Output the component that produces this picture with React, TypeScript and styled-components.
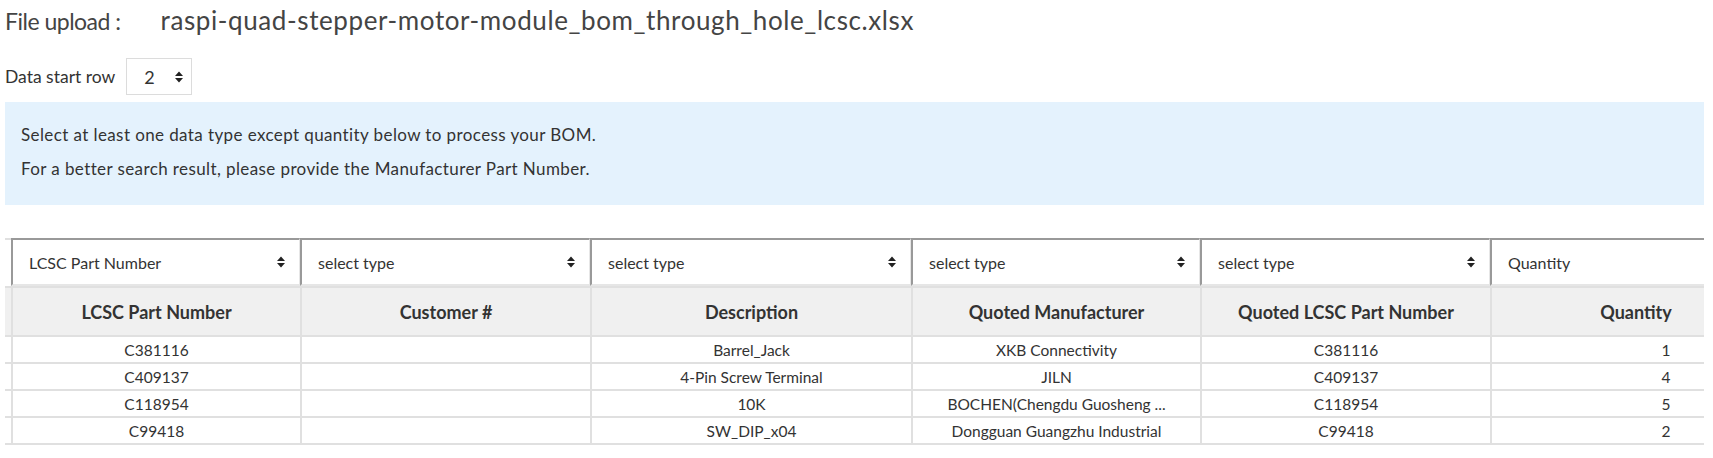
import React from 'react';
import styled, { createGlobalStyle } from 'styled-components';

const GlobalStyle = createGlobalStyle`
  body {
    margin: 0;
    background: #fff;
    font-family: Lato, "Open Sans", "Liberation Sans", sans-serif;
    color: #333;
  }
`;

const Page = styled.div`
  padding: 0 9px 0 5px;
  width: 1699px;
`;

const Title = styled.h2`
  margin: 0;
  display: flex;
  align-items: baseline;
  line-height: 40px;
  font-weight: 400;
  color: #444;
  white-space: nowrap;
`;

const TitleLabel = styled.span`
  font-size: 23px;
  letter-spacing: -0.5px;
`;

const FileName = styled.span`
  margin-left: 40px;
  font-size: 26px;
  letter-spacing: 0.6px;
`;

const Controls = styled.div`
  display: flex;
  align-items: center;
  gap: 11px;
  margin-top: 17px;
  font-size: 17.5px;
  color: #333;
`;

const SmallSelect = styled.div`
  box-sizing: border-box;
  width: 66px;
  height: 37px;
  border: 1px solid #dcdcdc;
  display: flex;
  align-items: center;
  justify-content: space-between;
  padding: 0 8px 0 17px;
  font-size: 18px;
  color: #333;
`;

const InfoBox = styled.div`
  margin-top: 7px;
  background: #e4f2fd;
  padding: 21px 16px 14px;
  font-size: 17px;
  letter-spacing: 0.4px;
  line-height: 24px;
  color: #333;
`;

const InfoLine = styled.p`
  margin: 0 0 10px;
`;

const Table = styled.div`
  margin-top: 33px;
  width: 1699px;
  overflow: hidden;
`;

const Row = styled.div`
  display: grid;
  grid-template-columns: 6px 289px 290px 321px 289px 290px 290px;
  width: max-content;
`;

const Spacer = styled.div<{ bg?: string }>`
  border-top: 2px solid #e0e0e0;
  background: ${p => p.bg || '#fff'};
`;

const SelectCell = styled.div`
  box-sizing: border-box;
  height: 48px;
  border-top: 2px solid #999;
  border-left: 2px solid #999;
  border-right: 1px solid #e6e6e6;
  border-bottom: 2px solid #e6e6e6;
  background: #fff;
  display: flex;
  align-items: center;
  justify-content: space-between;
  padding: 0 14px 0 16px;
  font-size: 16px;
  color: #333;
`;

const HeadCell = styled.div`
  box-sizing: border-box;
  height: 49px;
  border-top: 2px solid #e0e0e0;
  border-left: 2px solid #e0e0e0;
  background: #f0f0f0;
  display: flex;
  align-items: center;
  justify-content: center;
  font-size: 18px;
  font-weight: 700;
  color: #333;
`;

const DataCell = styled.div<{ shift?: number }>`
  box-sizing: border-box;
  height: 27px;
  border-top: 2px solid #e0e0e0;
  border-left: 2px solid #e0e0e0;
  display: flex;
  align-items: center;
  justify-content: center;
  padding-left: ${p => p.shift || 0}px;
  font-size: 15.5px;
  color: #333;
  white-space: nowrap;
`;

const BottomLine = styled.div`
  height: 2px;
  background: #e0e0e0;
`;

const SortIcon = () => (
  <svg width="8" height="12" viewBox="0 0 8 12">
    <path d="M0 5 L4 0.5 L8 5 Z M0 7 L4 11.5 L8 7 Z" fill="#222" />
  </svg>
);

const selects = ['LCSC Part Number', 'select type', 'select type', 'select type', 'select type', 'Quantity'];
const heads = ['LCSC Part Number', 'Customer #', 'Description', 'Quoted Manufacturer', 'Quoted LCSC Part Number', 'Quantity'];
const rows = [
  ['C381116', '', 'Barrel_Jack', 'XKB Connectivity', 'C381116', '1'],
  ['C409137', '', '4-Pin Screw Terminal', 'JILN', 'C409137', '4'],
  ['C118954', '', '10K', 'BOCHEN(Chengdu Guosheng ...', 'C118954', '5'],
  ['C99418', '', 'SW_DIP_x04', 'Dongguan Guangzhu Industrial', 'C99418', '2'],
];

const App = () => {
  return (
    <Page>
      <GlobalStyle />
      <Title>
        <TitleLabel>File upload :</TitleLabel>
        <FileName>raspi-quad-stepper-motor-module_bom_through_hole_lcsc.xlsx</FileName>
      </Title>
      <Controls>
        Data start row
        <SmallSelect>
          2
          <SortIcon />
        </SmallSelect>
      </Controls>
      <InfoBox>
        <InfoLine>Select at least one data type except quantity below to process your BOM.</InfoLine>
        <InfoLine>For a better search result, please provide the Manufacturer Part Number.</InfoLine>
      </InfoBox>
      <Table>
        <Row>
          <Spacer />
          {selects.map((s, i) => (
            <SelectCell key={i}>
              {s}
              <SortIcon />
            </SelectCell>
          ))}
        </Row>
        <Row>
          <Spacer bg="#f0f0f0" />
          {heads.map((h, i) => (
            <HeadCell key={i}>{h}</HeadCell>
          ))}
        </Row>
        {rows.map((r, ri) => (
          <Row key={ri}>
            <Spacer />
            {r.map((c, ci) => (
              <DataCell key={ci} shift={ci === 5 ? 60 : 0}>{c}</DataCell>
            ))}
          </Row>
        ))}
        <BottomLine />
      </Table>
    </Page>
  );
};

export default App;
